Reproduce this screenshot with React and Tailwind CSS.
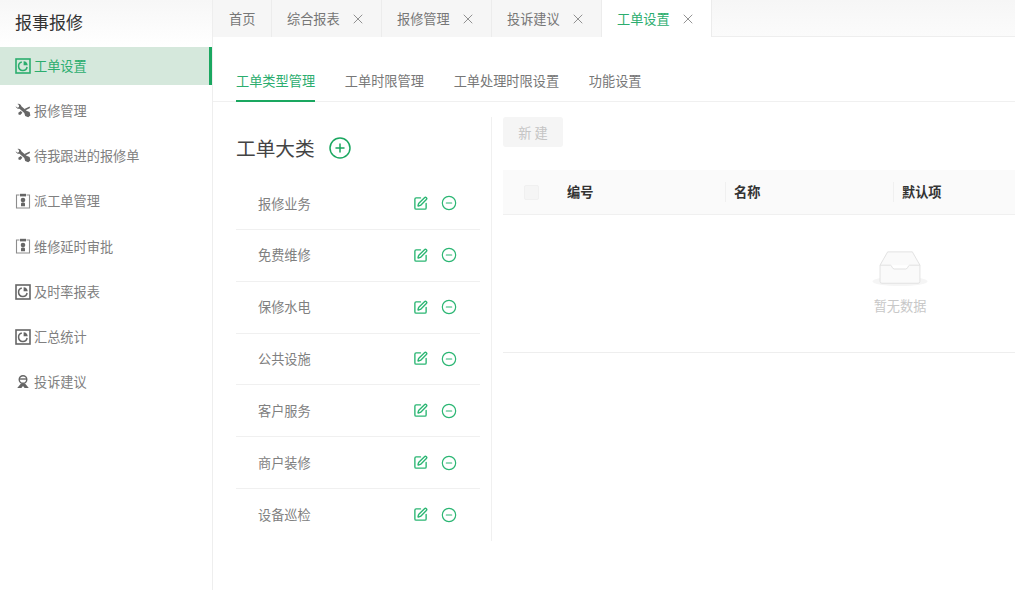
import React from "react";
import { SquarePen, CirclePlus, CircleMinus, X } from "lucide-react";

const FONT = "font-['Noto_Sans_CJK_SC','Noto_Sans',sans-serif]";

function PieBox({ className }) {
  return (
    <svg viewBox="0 0 16 16" className={className} fill="none" stroke="currentColor">
      <rect x="1" y="1" width="14" height="14" strokeWidth="1.6" />
      <path d="M6.800 4a4.300 4.300 0 1 0 5.300 5" strokeWidth="1.500" />
      <path d="M8.600 3.200a4.400 4.400 0 0 1 4.100 4.100H8.600z" fill="currentColor" stroke="none" />
    </svg>
  );
}
function Tools({ className }) {
  return (
    <svg viewBox="0 0 16 16" className={className} fill="currentColor">
      <path d="M.6 3.200 2.600 4.800 4 3.900 3.900 1.900 2.500.9C4.400.5 6 1.500 6.400 3.200l5.100 4.600 3.100 1.300.8 3.500-2.200 1.600-3-1.300-.9-2.800L4.500 5.700C2.800 6.100 1 5 .6 3.200z" />
      <path d="M14.600 3.600 9.400 6l1.300 1.300 4.300-2.200zM5.800 7.900 3.300 9.800l.2 1.700 1.700.4 2.200-2.200z" />
    </svg>
  );
}
function Badge({ className }) {
  return (
    <svg viewBox="0 0 16 16" className={className} fill="none" stroke="currentColor">
      <path d="M4.500 2H1.500v13h13V2h-3" strokeWidth="1.100" opacity="0.75" />
      <path d="M5 .8h6v2.600H5z" fill="currentColor" stroke="none" />
      <circle cx="8" cy="7" r="2.300" fill="currentColor" stroke="none" />
      <path d="M6 13.200v-2.600c0-.7.900-1 2-1s2 .3 2 1v2.600z" fill="currentColor" stroke="none" />
    </svg>
  );
}
function Person({ className }) {
  return (
    <svg viewBox="0 0 16 16" className={className} fill="none" stroke="currentColor">
      <circle cx="8" cy="5.500" r="3.800" strokeWidth="1.400" />
      <path d="M4.200 5h7.600" strokeWidth="1.400" />
      <path d="M6 9.600 2.200 14h4.200L8 12l1.600 2h4.200L10 9.600z" fill="currentColor" stroke="none" />
    </svg>
  );
}

const menu = [
  { label: "工单设置", Icon: PieBox, active: true },
  { label: "报修管理", Icon: Tools },
  { label: "待我跟进的报修单", Icon: Tools },
  { label: "派工单管理", Icon: Badge },
  { label: "维修延时审批", Icon: Badge },
  { label: "及时率报表", Icon: PieBox },
  { label: "汇总统计", Icon: PieBox },
  { label: "投诉建议", Icon: Person },
];

const tabs = [
  { label: "首页", w: "w-[59px] pl-[16px]" },
  { label: "综合报表", w: "w-[110px] pl-[15px]", close: true },
  { label: "报修管理", w: "w-[110px] pl-[15px]", close: true },
  { label: "投诉建议", w: "w-[110px] pl-[15px]", close: true },
  { label: "工单设置", w: "w-[110px] pl-[15px]", close: true, active: true },
];

const categories = ["报修业务", "免费维修", "保修水电", "公共设施", "客户服务", "商户装修", "设备巡检"];

export default function App() {
  return (
    <div className={`${FONT} flex h-[590px] w-[1015px] overflow-hidden bg-white text-[13.2px] text-[#777]`}>
      <aside className="w-[213px] shrink-0 border-r border-[#eeeeee]">
        <div className="flex h-[47px] items-center bg-gradient-to-b from-[#f7f7f7] to-white pb-[3px] pl-[15px] text-[17px] text-[#333]">
          报事报修
        </div>
        <nav className="flex flex-col gap-[7.12px]">
          {menu.map(({ label, Icon, active }) => (
            <div
              key={label}
              className={`flex h-[38px] items-center gap-[3px] pl-[15px] ${
                active ? "border-r-[3px] border-[#1aa760] bg-[#d5e8dc] text-[#2bad6e]" : "text-[#808080]"
              }`}
            >
              <Icon className={`h-[16px] w-[16px] ${active ? "text-[#2bad6e]" : "text-[#666]"}`} />
              <span>{label}</span>
            </div>
          ))}
        </nav>
      </aside>

      <main className="flex min-w-0 flex-1 flex-col">
        <div className="flex h-[37px] shrink-0 border-b border-[#eeeeee] bg-gradient-to-b from-[#f6f6f6] to-[#fbfbfb]">
          {tabs.map((t) => (
            <div
              key={t.label}
              className={`flex ${t.w} h-[37px] shrink-0 items-center border-r border-[#ececec] ${
                t.active ? "bg-white text-[#2bad6e]" : "bg-[#f6f6f6] text-[#777]"
              }`}
            >
              <span>{t.label}</span>
              {t.close && <X className="ml-[10px] h-[16px] w-[16px] text-[#777]" strokeWidth={1.2} />}
            </div>
          ))}
        </div>

        <div className="mt-[28px] flex h-[37px] shrink-0 gap-[29.7px] border-b border-[#f0f0f0] pl-[23px]">
          {["工单类型管理", "工单时限管理", "工单处理时限设置", "功能设置"].map((t, i) => (
            <div
              key={t}
              className={`flex h-[37px] items-start pt-[6px] ${
                i === 0 ? "border-b-2 border-[#1aa760] text-[#2bad6e]" : "text-[#777]"
              }`}
            >
              {t}
            </div>
          ))}
        </div>

        <div className="mt-[15px] flex min-h-0 items-start">
          <section className="ml-[23px] h-[424px] w-[256px] shrink-0 border-r border-[#f0f0f0] pr-[11px]">
            <div className="flex h-[61px] items-center gap-[13px] pt-[1px] text-[19.7px] text-[#444]">
              <span>工单大类</span>
              <CirclePlus className="h-[24px] w-[24px] text-[#1aa760]" strokeWidth={1.5} />
            </div>
            <ul>
              {categories.map((c, i) => (
                <li
                  key={c}
                  className={`flex h-[51.85px] items-center pl-[22px] pr-[23px] ${
                    i < categories.length - 1 ? "border-b border-[#f0f0f0]" : ""
                  }`}
                >
                  <span className="flex-1 text-[#808080]">{c}</span>
                  <SquarePen className="h-[15px] w-[15px] text-[#2bb673]" strokeWidth={2.2} />
                  <CircleMinus className="ml-[13px] h-[16px] w-[16px] text-[#2bb673]" strokeWidth={1.8} />
                </li>
              ))}
            </ul>
          </section>

          <section className="ml-[11px] min-w-0 flex-1">
            <div className="flex h-[30px] w-[60px] items-center justify-center rounded-[3px] bg-[#f5f5f5] pt-[1px] text-[#c4c4c4]">
              新 建
            </div>
            <div className="mt-[23px] flex h-[45px] items-center border-b border-[#f0f0f0] bg-[#fafafa] font-bold text-[#333]">
              <div className="ml-[21px] h-[15px] w-[15px] rounded-[2px] border border-[#f0f0f0] bg-[#f5f5f5]" />
              <div className="ml-[28px] w-[158px]">编号</div>
              <div className="h-[20px] w-px bg-[#f0f0f0]" />
              <div className="ml-[8px] w-[158.5px]">名称</div>
              <div className="h-[20px] w-px bg-[#f0f0f0]" />
              <div className="ml-[8.5px]">默认项</div>
            </div>
            <div className="flex h-[138px] flex-col items-center border-b border-[#eeeeee] pl-[282px] pt-[35px]">
              <svg viewBox="0 0 60 40" className="h-[38px] w-[60px]" fill="none">
                <ellipse cx="30" cy="33" rx="29" ry="5" fill="#f5f5f5" />
                <path d="M9 16 17 2h26l8 14v17a2 2 0 0 1-2 2H11a2 2 0 0 1-2-2z" fill="#fafafa" stroke="#e0e0e0" strokeWidth="1" />
                <path d="M9 16h11c1.500 0 1.500 4 4 4h12c2.500 0 2.500-4 4-4h11" fill="#fff" stroke="#e0e0e0" strokeWidth="1" />
              </svg>
              <div className="mt-[8px] text-[#c8c8c8]">暂无数据</div>
            </div>
          </section>
        </div>
      </main>
    </div>
  );
}
